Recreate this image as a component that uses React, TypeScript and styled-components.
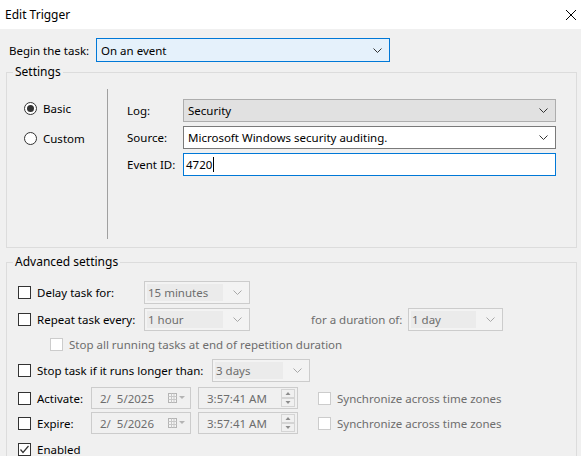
import styled, { createGlobalStyle } from 'styled-components';

const GlobalStyle = createGlobalStyle`
  html, body {
    margin: 0;
    padding: 0;
    background: #f0f0f0;
  }
  body {
    font-family: "Noto Sans", "Open Sans", sans-serif;
    font-size: 11.5px;
    color: #000;
  }
`;

const Window = styled.div`
  width: 581px;
  height: 456px;
  overflow: hidden;
  background: #f0f0f0;
  display: flex;
  flex-direction: column;
`;

const TitleBar = styled.div`
  height: 29px;
  flex: none;
  background: #ffffff;
  display: flex;
  align-items: center;
  justify-content: space-between;
  padding: 0 4px 0 5px;
  font-size: 12px;
`;

const Body = styled.div`
  padding: 0 4px 0 6px;
  display: flex;
  flex-direction: column;
`;

const BeginRow = styled.div`
  margin-top: 9px;
  padding-left: 3px;
  display: flex;
  align-items: center;
  height: 24px;
`;

const BeginLabel = styled.span`
  width: 87px;
  flex: none;
`;

const Group = styled.fieldset<{ $mt: number }>`
  margin: ${({ $mt }) => $mt}px 0 0 0;
  padding: 0;
  border: 1px solid #dcdcdc;
  min-width: 0;
  width: 571px;
  box-sizing: border-box;
`;

const GroupTitle = styled.legend`
  margin-left: 6px;
  padding: 0 2px;
  line-height: 16px;
  font-size: 12px;
`;

const SettingsBody = styled.div`
  display: flex;
  padding: 9px 0 8px 0;
`;

const RadioColumn = styled.div`
  width: 101px;
  height: 150px;
  border-right: 1px solid #a0a0a0;
  padding: 11px 0 0 17px;
  box-sizing: border-box;
  display: flex;
  flex-direction: column;
  gap: 14px;
`;

const RadioRow = styled.label`
  display: flex;
  align-items: center;
  height: 16px;
  gap: 6px;
`;

const RadioDot = styled.span<{ $on?: boolean }>`
  width: 13px;
  height: 13px;
  box-sizing: border-box;
  border-radius: 50%;
  border: 1px solid #333333;
  background: #ffffff;
  display: flex;
  align-items: center;
  justify-content: center;
  flex: none;

  &::after {
    content: '';
    width: 7px;
    height: 7px;
    border-radius: 50%;
    background: ${({ $on }) => ($on ? '#333333' : 'transparent')};
  }
`;

const FieldColumn = styled.div`
  padding: 10px 0 0 19px;
  display: flex;
  flex-direction: column;
  gap: 4px;
`;

const FieldRow = styled.div`
  display: flex;
  align-items: center;
`;

const FieldLabel = styled.span`
  width: 56px;
  flex: none;
`;

type ComboKind = 'focus' | 'list' | 'edit' | 'disabled';

const comboColors: Record<ComboKind, { bg: string; border: string }> = {
  focus: { bg: '#e5f1fb', border: '#0078d7' },
  list: { bg: '#e1e1e1', border: '#adadad' },
  edit: { bg: '#ffffff', border: '#7a7a7a' },
  disabled: { bg: '#f3f3f3', border: '#cccccc' },
};

const Combo = styled.div<{ $kind: ComboKind; $w: number; $h: number }>`
  width: ${({ $w }) => $w}px;
  height: ${({ $h }) => $h}px;
  box-sizing: border-box;
  flex: none;
  border: 1px solid ${({ $kind }) => comboColors[$kind].border};
  background: ${({ $kind }) => comboColors[$kind].bg};
  display: flex;
  align-items: center;
  padding: ${({ $kind }) => ($kind === 'disabled' ? '2px 7px 2px 2px' : '0 7px 0 3px')};
  color: ${({ $kind }) => ($kind === 'disabled' ? '#6d6d6d' : '#000000')};
`;

const ComboText = styled.span<{ $disabled?: boolean }>`
  flex: 1;
  align-self: stretch;
  display: flex;
  align-items: center;
  padding-left: ${({ $disabled }) => ($disabled ? '1px' : '1px')};
  margin-right: ${({ $disabled }) => ($disabled ? '10px' : '0')};
  background: ${({ $disabled }) => ($disabled ? '#ebebeb' : 'transparent')};
  white-space: nowrap;
  overflow: hidden;
`;

const TextInput = styled.div<{ $w: number }>`
  width: ${({ $w }) => $w}px;
  height: 23px;
  box-sizing: border-box;
  border: 1px solid #0078d7;
  background: #ffffff;
  display: flex;
  align-items: center;
  padding-left: 2px;
`;

const Caret = styled.span`
  width: 1px;
  height: 15px;
  background: #000000;
  margin-left: 1px;
`;

const AdvancedBody = styled.div`
  padding: 11px 0 0 11px;
  display: flex;
  flex-direction: column;
  height: 200px;
`;

const Row = styled.div<{ $mt?: number; $h?: number; $indent?: number }>`
  display: flex;
  align-items: center;
  height: ${({ $h }) => $h ?? 23}px;
  margin-top: ${({ $mt }) => $mt ?? 0}px;
  padding-left: ${({ $indent }) => $indent ?? 0}px;
  flex: none;
`;

const CheckLabel = styled.label<{ $w?: number; $disabled?: boolean }>`
  display: flex;
  align-items: center;
  gap: 6px;
  width: ${({ $w }) => ($w ? `${$w}px` : 'auto')};
  flex: none;
  color: ${({ $disabled }) => ($disabled ? '#6d6d6d' : '#000000')};
  white-space: nowrap;
`;

const Box = styled.span<{ $disabled?: boolean }>`
  width: 13px;
  height: 13px;
  box-sizing: border-box;
  border: 1px solid ${({ $disabled }) => ($disabled ? '#cccccc' : '#333333')};
  background: #ffffff;
  flex: none;
  display: flex;
  align-items: center;
  justify-content: center;
`;

const MutedText = styled.span<{ $w?: number; $ml?: number }>`
  color: #6d6d6d;
  width: ${({ $w }) => ($w ? `${$w}px` : 'auto')};
  margin-left: ${({ $ml }) => $ml ?? 0}px;
  flex: none;
  white-space: nowrap;
`;

const Picker = styled.div<{ $w: number; $ml?: number }>`
  width: ${({ $w }) => $w}px;
  height: 22px;
  box-sizing: border-box;
  margin-left: ${({ $ml }) => $ml ?? 0}px;
  border: 1px solid #cccccc;
  background: #f0f0f0;
  display: flex;
  align-items: center;
  padding: 0 2px 0 8px;
  color: #6d6d6d;
  flex: none;
`;

const PickerText = styled.span`
  flex: 1;
  white-space: pre;
`;

const SyncLabel = styled(CheckLabel)`
  margin-left: 20px;
`;

const Chevron = ({ color = '#333333' }: { color?: string }) => (
  <svg width="9" height="5" viewBox="0 0 9 5" style={{ flex: 'none' }}>
    <polyline points="0.5,0.5 4.5,4.5 8.5,0.5" fill="none" stroke={color} strokeWidth="1" />
  </svg>
);

const CloseIcon = () => (
  <svg width="12" height="12" viewBox="0 0 12 12">
    <line x1="1" y1="1" x2="11" y2="11" stroke="#000" strokeWidth="1" />
    <line x1="11" y1="1" x2="1" y2="11" stroke="#000" strokeWidth="1" />
  </svg>
);

const CalendarIcon = () => (
  <svg width="18" height="10" viewBox="0 0 18 10" style={{ flex: 'none', marginRight: 2 }}>
    <rect x="0.5" y="0.5" width="8" height="9" fill="#f4f4f4" stroke="#b4b4b4" />
    <line x1="0.5" y1="3.5" x2="8.5" y2="3.5" stroke="#c8c8c8" />
    <line x1="0.5" y1="6.5" x2="8.5" y2="6.5" stroke="#c8c8c8" />
    <line x1="3.5" y1="0.5" x2="3.5" y2="9.5" stroke="#c8c8c8" />
    <line x1="6" y1="0.5" x2="6" y2="9.5" stroke="#c8c8c8" />
    <polygon points="11,3 17,3 14,6" fill="#b4b4b4" />
  </svg>
);

const SpinIcon = () => (
  <svg width="14" height="18" viewBox="0 0 14 18" style={{ flex: 'none' }}>
    <rect x="0.5" y="0.5" width="13" height="8" fill="#f0f0f0" stroke="#d4d4d4" />
    <rect x="0.5" y="9.5" width="13" height="8" fill="#f0f0f0" stroke="#d4d4d4" />
    <polygon points="4.5,6 9.5,6 7,3" fill="#8c8c8c" />
    <polygon points="4.5,12 9.5,12 7,15" fill="#8c8c8c" />
  </svg>
);

const CheckMark = () => (
  <svg width="11" height="11" viewBox="0 0 11 11">
    <polyline points="1.5,5.5 4,8.5 9.5,2" fill="none" stroke="#333333" strokeWidth="1.2" />
  </svg>
);

const DateRow = ({ label, date }: { label: string; date: string }) => (
  <>
    <CheckLabel $w={73}>
      <Box />
      {label}
    </CheckLabel>
    <Picker $w={100}>
      <PickerText>{date}</PickerText>
      <CalendarIcon />
    </Picker>
    <Picker $w={100} $ml={7}>
      <PickerText>3:57:41 AM</PickerText>
      <SpinIcon />
    </Picker>
    <SyncLabel $disabled>
      <Box $disabled />
      Synchronize across time zones
    </SyncLabel>
  </>
);

export default function App() {
  return (
    <Window>
      <GlobalStyle />
      <TitleBar>
        <span>Edit Trigger</span>
        <CloseIcon />
      </TitleBar>
      <Body>
        <BeginRow>
          <BeginLabel>Begin the task:</BeginLabel>
          <Combo $kind="focus" $w={294} $h={24}>
            <ComboText>On an event</ComboText>
            <Chevron />
          </Combo>
        </BeginRow>

        <Group $mt={2}>
          <GroupTitle>Settings</GroupTitle>
          <SettingsBody>
            <RadioColumn>
              <RadioRow>
                <RadioDot $on />
                Basic
              </RadioRow>
              <RadioRow>
                <RadioDot />
                Custom
              </RadioRow>
            </RadioColumn>
            <FieldColumn>
              <FieldRow>
                <FieldLabel>Log:</FieldLabel>
                <Combo $kind="list" $w={373} $h={23}>
                  <ComboText>Security</ComboText>
                  <Chevron />
                </Combo>
              </FieldRow>
              <FieldRow>
                <FieldLabel>Source:</FieldLabel>
                <Combo $kind="edit" $w={373} $h={23}>
                  <ComboText>Microsoft Windows security auditing.</ComboText>
                  <Chevron />
                </Combo>
              </FieldRow>
              <FieldRow>
                <FieldLabel>Event ID:</FieldLabel>
                <TextInput $w={373}>
                  4720
                  <Caret />
                </TextInput>
              </FieldRow>
            </FieldColumn>
          </SettingsBody>
        </Group>

        <Group $mt={6}>
          <GroupTitle>Advanced settings</GroupTitle>
          <AdvancedBody>
            <Row>
              <CheckLabel $w={126}>
                <Box />
                Delay task for:
              </CheckLabel>
              <Combo $kind="disabled" $w={106} $h={23}>
                <ComboText $disabled>15 minutes</ComboText>
                <Chevron color="#a8a8a8" />
              </Combo>
            </Row>
            <Row $mt={4}>
              <CheckLabel $w={126}>
                <Box />
                Repeat task every:
              </CheckLabel>
              <Combo $kind="disabled" $w={106} $h={23}>
                <ComboText $disabled>1 hour</ComboText>
                <Chevron color="#a8a8a8" />
              </Combo>
              <MutedText $ml={61} $w={97}>
                for a duration of:
              </MutedText>
              <Combo $kind="disabled" $w={95} $h={23}>
                <ComboText $disabled>1 day</ComboText>
                <Chevron color="#a8a8a8" />
              </Combo>
            </Row>
            <Row $mt={3} $h={20} $indent={32}>
              <CheckLabel $disabled>
                <Box $disabled />
                Stop all running tasks at end of repetition duration
              </CheckLabel>
            </Row>
            <Row $mt={5}>
              <CheckLabel $w={194}>
                <Box />
                Stop task if it runs longer than:
              </CheckLabel>
              <Combo $kind="disabled" $w={98} $h={23}>
                <ComboText $disabled>3 days</ComboText>
                <Chevron color="#a8a8a8" />
              </Combo>
            </Row>
            <Row $mt={5} $h={22}>
              <DateRow label="Activate:" date="2/  5/2025" />
            </Row>
            <Row $mt={3} $h={22}>
              <DateRow label="Expire:" date="2/  5/2026" />
            </Row>
            <Row $mt={7} $h={16}>
              <CheckLabel>
                <Box>
                  <CheckMark />
                </Box>
                Enabled
              </CheckLabel>
            </Row>
          </AdvancedBody>
        </Group>
      </Body>
    </Window>
  );
}
